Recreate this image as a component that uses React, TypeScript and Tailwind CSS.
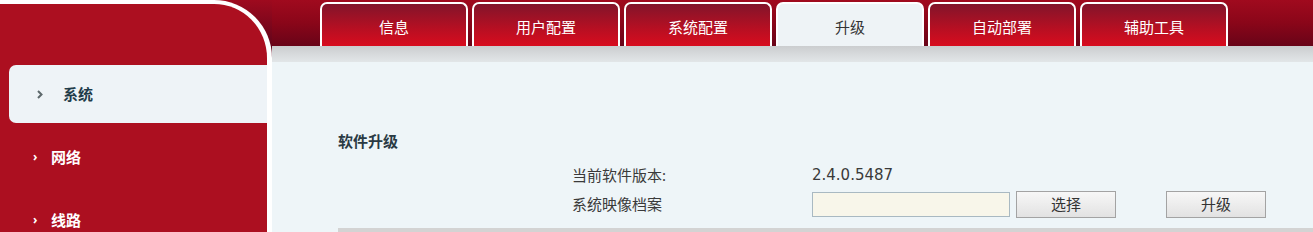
import React from "react";

const FONT = { fontFamily: '"Noto Sans", "Noto Sans CJK SC", sans-serif' };

const tabs = ["信息", "用户配置", "系统配置", "升级", "自动部署", "辅助工具"];

function Tab({ label, active }: { label: string; active?: boolean }) {
  return (
    <div
      className={
        "w-[148px] h-[44px] shrink-0 border-2 border-b-0 border-white rounded-t-[7px] flex items-center justify-center pt-[4px] text-[15px] " +
        (active
          ? "bg-[#eef3f6] text-[#333333]"
          : "bg-[linear-gradient(180deg,#82142a_0%,#b80f22_60%,#d80c1e_100%)] text-white")
      }
    >
      {label}
    </div>
  );
}

function SideItem({ label, active }: { label: string; active?: boolean }) {
  if (active) {
    return (
      <div className="ml-[9px] h-[58px] rounded-l-[7px] bg-[#eef3f7] flex items-center pl-[28px]">
        <span className="w-[26px] flex items-center">
          <svg width="6" height="9" viewBox="0 0 6 9">
            <path d="M1 1 L4.5 4.5 L1 8" fill="none" stroke="#5d686c" strokeWidth="2" />
          </svg>
        </span>
        <span className="text-[15px] font-bold text-[#1e3b4a]">{label}</span>
      </div>
    );
  }
  return (
    <div className="h-[58px] flex items-center pl-[33px]">
      <span className="text-white text-[12px] font-bold w-[18px] leading-none">›</span>
      <span className="text-[15px] font-bold text-white">{label}</span>
    </div>
  );
}

export default function App() {
  return (
    <div
      className="flex w-[1313px] h-[232px] overflow-hidden bg-[linear-gradient(180deg,#9e0a1e_0px,#62041a_46px,#62041a_100%)]"
      style={FONT}
    >
      <div className="w-[272px] shrink-0 h-[260px] bg-[#ac0f20] border-t-4 border-r-[5px] border-white rounded-tr-[58px]">
        <div className="mt-[61px] flex flex-col gap-[5px]">
          <SideItem label="系统" active />
          <SideItem label="网络" />
          <SideItem label="线路" />
        </div>
      </div>
      <div className="flex-1 flex flex-col min-h-0">
        <div className="h-[46px] shrink-0 flex items-end gap-[4px] pl-[48px] bg-[linear-gradient(180deg,#a00a1e_0%,#8a0619_50%,#680418_100%)]">
          {tabs.map((t) => (
            <Tab key={t} label={t} active={t === "升级"} />
          ))}
        </div>
        <div className="h-[16px] shrink-0 bg-[linear-gradient(180deg,#cbcdcf,#e2e6e8)]" />
        <div className="flex-1 min-h-0 overflow-hidden bg-[#eef5f8] pl-[66px]">
          <div className="mt-[69px] leading-[20px] text-[15px] font-bold text-[#2a3a44]">软件升级</div>
          <div className="ml-[234px] mt-[14px] flex items-center h-[20px] text-[15px] text-[#3a3a3a]">
            <div className="w-[240px]">当前软件版本:</div>
            <div style={{ fontFamily: '"DejaVu Sans", sans-serif' }} className="text-[15px] text-[#3a3a3a]">2.4.0.5487</div>
          </div>
          <div className="ml-[234px] mt-[6px] flex items-center h-[27px] text-[15px] text-[#3a3a3a]">
            <div className="w-[240px]">系统映像档案</div>
            <div className="w-[198px] h-[25px] bg-[#f8f6ea] border border-[#a9b9c2]" />
            <button className="ml-[6px] w-[100px] h-[27px] border border-[#a3a3a3] bg-[linear-gradient(180deg,#f7f7f7,#e2e2e2)] text-[15px] text-[#333333] flex items-center justify-center">
              选择
            </button>
            <button className="ml-[50px] w-[100px] h-[27px] border border-[#a3a3a3] bg-[linear-gradient(180deg,#f7f7f7,#e2e2e2)] text-[15px] text-[#333333] flex items-center justify-center">
              升级
            </button>
          </div>
          <div className="mt-[10px] h-[8px] bg-[#d3d3d3]" />
        </div>
      </div>
    </div>
  );
}
